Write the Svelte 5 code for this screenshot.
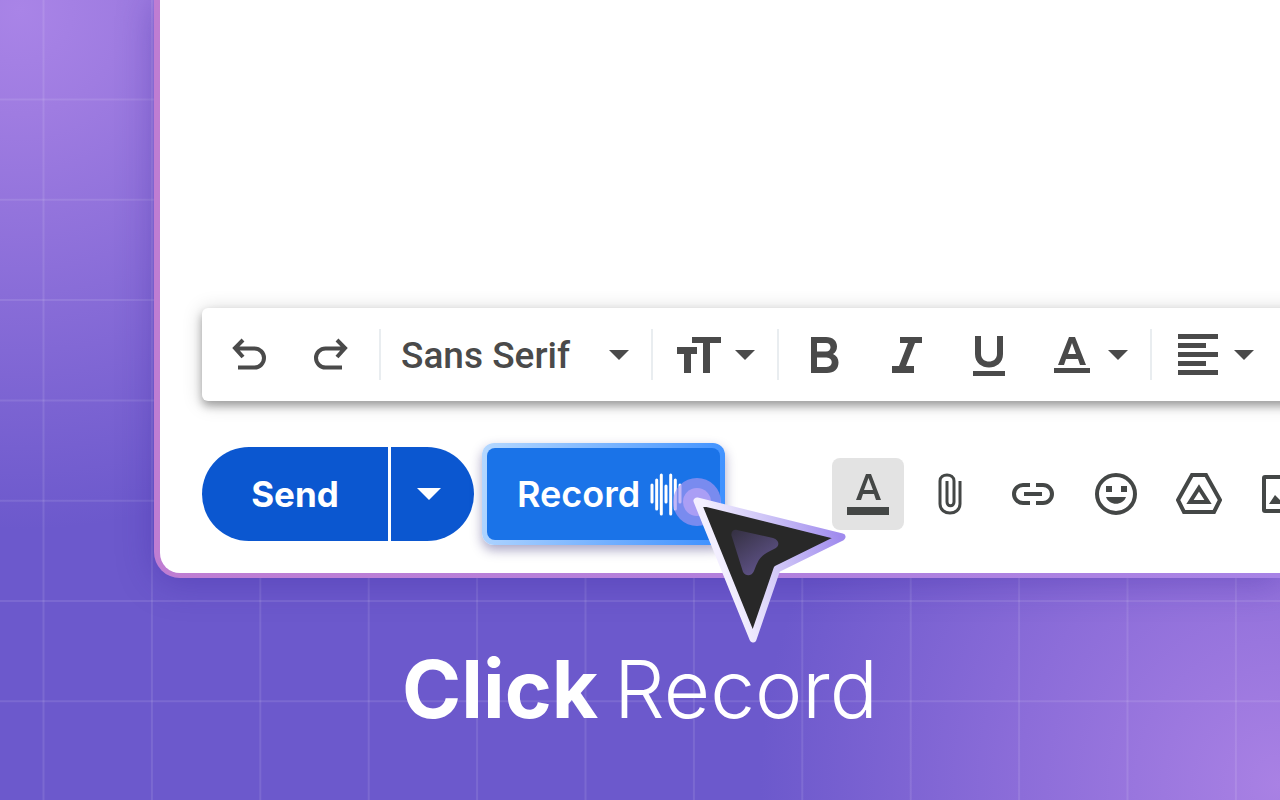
<script lang="ts">
  // Grid lines drawn behind the composer.
  const columns = Array.from({ length: 24 }, (_, i) => 43.5 + i * 108.4);
  const rows = Array.from({ length: 16 }, (_, i) => 99.5 + i * 100.3);

  // Bars of the waveform glyph: [x, top, bottom]
  const bars = [
    [2, 12, 29],
    [6.7, 7, 36],
    [11.3, 2, 41],
    [16, 13, 29],
    [20.7, 2, 41],
    [25.3, 7, 36],
    [30, 12, 29],
  ];

  let font = $state("Sans Serif");
  let formatting = $state(true);
</script>

{#snippet caret()}
  <svg class="caret" viewBox="0 0 20 10" aria-hidden="true"><path d="M0 0h20L10 10z" /></svg>
{/snippet}

<main class="stage">
  <svg class="grid" aria-hidden="true">
    {#each columns as x}
      <line x1={x} x2={x} y1="0" y2="100%" />
    {/each}
    {#each rows as y}
      <line x1="0" x2="100%" y1={y} y2={y} />
    {/each}
  </svg>

  <section class="frame">
    <div class="composer">
      <textarea class="message" aria-label="Message body"></textarea>

      <div class="toolbar" role="toolbar" aria-label="Formatting options">
        <button class="tool" aria-label="Undo">
          <svg width="36" height="36" viewBox="0 0 36 36" class="stroke">
            <path d="M12 3l-8 8 8 9M4 11.500h19.500a9 9 0 0 1 0 19H7" />
          </svg>
        </button>
        <button class="tool" aria-label="Redo">
          <svg width="36" height="36" viewBox="0 0 36 36" class="stroke">
            <path d="M24 3l8 8-8 9M32 11.500H12.500a9 9 0 0 0 0 19H29" />
          </svg>
        </button>
        <span class="rule spaced"></span>
        <label class="font">
          <select bind:value={font} aria-label="Font">
            <option>Sans Serif</option>
            <option>Serif</option>
          </select>
          {@render caret()}
        </label>
        <span class="rule"></span>
        <button class="menu size" aria-label="Size">
          <svg width="44" height="36" viewBox="0 0 44 36">
            <path d="M15 0h29v6H33v30h-7V6H15zM0 10h20v7h-6v19H7V17H0z" />
          </svg>
          {@render caret()}
        </button>
        <span class="rule gap"></span>
        <button class="tool" aria-label="Bold">
          <svg width="28" height="36" viewBox="0 0 28 36">
            <path fill-rule="evenodd" d="M0 0h15c7 0 11 4 11 9.500 0 3.500-1.500 6-4 7.500 3.500 1.500 5.500 4.500 5.500 8.500C27.500 32 23 36 16 36H0zM6 6v8.500h9c6 0 6-8.500 0-8.500zM6 20.500V30h9.500c7 0 7-9.500 0-9.500z" />
          </svg>
        </button>
        <button class="tool" aria-label="Italic">
          <svg width="30" height="36" viewBox="0 0 30 36">
            <path d="M8 0h22v6h-7L14 29h8v7H0v-7h7l9-23H8z" />
          </svg>
        </button>
        <button class="tool" aria-label="Underline">
          <svg width="32" height="42" viewBox="0 0 32 42">
            <path d="M2 2h6v18c0 10 16 10 16 0V2h6v18c0 18-28 18-28 0zM0 37h32v5H0z" />
          </svg>
        </button>
        <button class="menu color" aria-label="Text color">
          <svg width="36" height="36" viewBox="0 0 36 36">
            <path fill-rule="evenodd" d="M15 0h6l11 28h-6l-2-6H12l-2 6H4zM14 17h8L18 6zM0 31h36v5H0z" />
          </svg>
          {@render caret()}
        </button>
        <span class="rule"></span>
        <button class="menu align" aria-label="Align">
          <svg width="40" height="42" viewBox="0 0 40 42">
            <path d="M0 0h40v5H0zM0 9h28v5H0zM0 18h40v5H0zM0 27h28v5H0zM0 36h40v5H0z" />
          </svg>
          {@render caret()}
        </button>
      </div>

      <div class="actions">
        <div class="send-group">
          <button class="send">Send</button>
          <button class="send-more" aria-label="More send options">
            <svg width="24" height="12" viewBox="0 0 24 12"><path d="M0 0h24L12 12z" /></svg>
          </button>
        </div>

        <div class="record-wrap">
          <button class="record">
            <span class="record-face">
              Record
              <svg width="33" height="43" viewBox="0 0 33 43" aria-hidden="true">
                {#each bars as [x, top, bottom]}
                  <line x1={x} x2={x} y1={top} y2={bottom} />
                {/each}
              </svg>
            </span>
          </button>
          <svg class="pointer" width="180" height="176" viewBox="0 0 180 176" aria-hidden="true">
            <defs>
              <linearGradient id="edge" gradientUnits="userSpaceOnUse" x1="50" y1="90" x2="165" y2="55">
                <stop offset="0" stop-color="#f3efff" />
                <stop offset="0.5" stop-color="#cbc1f6" />
                <stop offset="1" stop-color="#a08bee" />
              </linearGradient>
              <linearGradient id="core" x1="0" y1="0" x2="0.7" y2="1">
                <stop offset="0" stop-color="#343041" />
                <stop offset="1" stop-color="#62558d" />
              </linearGradient>
            </defs>
            <circle cx="25" cy="29" r="24" fill="#a797f2" fill-opacity="0.68" />
            <circle cx="25" cy="29" r="14" fill="#aa9ef5" />
            <path d="M25 28 170 64 105 96 81 166z" fill="#282828" stroke="url(#edge)" stroke-width="7" stroke-linejoin="round" />
            <path d="M65 57 101 65c7 2 7 9 1 11-13 6-15 9-20 22-2 5-8 6-11 1L60 64c-2-4 1-8 5-7z" fill="url(#core)" />
          </svg>
        </div>

        <div class="extras">
          <button
            class="format"
            class:on={formatting}
            aria-label="Formatting options"
            aria-pressed={formatting}
            onclick={() => (formatting = !formatting)}
          >
            <svg width="42" height="42" viewBox="0 0 42 42">
              <path fill-rule="evenodd" d="M19 1h5l10 26h-5l-2-6H16l-2 6H9zM17 17h9L21.500 5zM0 34h42v8H0z" />
            </svg>
          </button>
          <button class="extra" aria-label="Attach files">
            <svg width="24" height="42" viewBox="0 0 24 42" class="stroke thin">
              <path d="M22 8v23c0 12-20 12-20 0V8c0-8 14-8 14 0v21c0 5-7 5-7 0V8" />
            </svg>
          </button>
          <button class="extra" aria-label="Insert link">
            <svg width="42" height="22" viewBox="0 0 42 22" class="stroke">
              <path d="M18 2h-7a9 9 0 0 0 0 18h7M24 2h7a9 9 0 0 1 0 18h-7M12 11h18" />
            </svg>
          </button>
          <button class="extra" aria-label="Insert emoji">
            <svg width="42" height="42" viewBox="0 0 42 42">
              <circle cx="21" cy="21" r="19" fill="none" stroke="currentColor" stroke-width="4" />
              <path d="M11 13h6v6h-6zM26 13h6v6h-6zM11 24h20c-3 9-17 9-20 0z" />
            </svg>
          </button>
          <button class="extra" aria-label="Insert files from Drive">
            <svg width="46" height="42" viewBox="0 0 46 42" class="stroke">
              <path d="M16 2h14l14 25-6 12H8L2 27z" />
              <path d="M23 15 32 29H14z" />
            </svg>
          </button>
          <button class="extra" aria-label="Insert photo">
            <svg width="40" height="38" viewBox="0 0 40 38">
              <rect x="2" y="2" width="36" height="34" rx="1" fill="none" stroke="currentColor" stroke-width="4" />
              <path d="M7 29l6-9 5 5 7-9 9 13z" />
            </svg>
          </button>
        </div>
      </div>
    </div>
  </section>

  <h1 class="caption"><strong>Click</strong> Record</h1>
</main>

<style>
  :global(body) {
    margin: 0;
  }

  .stage {
    position: relative;
    display: flex;
    flex-direction: column;
    min-height: 100vh;
    overflow: hidden;
    font-family: Inter, sans-serif;
    background:
      radial-gradient(circle 520px at 20px 10px, #a984e7 0%, #9f7ce1 20%, rgba(109, 90, 205, 0) 100%),
      radial-gradient(circle 520px at 100% 98%, #a981e4 0%, #8c6dd9 50%, #6c59cc 100%),
      #6c59cc;
  }

  .grid {
    position: absolute;
    inset: 0;
    width: 100%;
    height: 100%;
    stroke: rgba(255, 255, 255, 0.1);
    stroke-width: 2;
  }

  .frame {
    position: relative;
    z-index: 1;
    display: flex;
    flex: 1;
    margin-left: 154px;
    padding: 0 0 5px 6px;
    border-bottom-left-radius: 26px;
    background: linear-gradient(90deg, #bf7dd2, #a783e6);
    box-shadow: 0 4px 36px rgba(50, 30, 150, 0.34);
  }

  .composer {
    display: flex;
    flex: 1;
    flex-direction: column;
    min-width: 0;
    padding: 0 0 28px 42px;
    border-bottom-left-radius: 20px;
    background: #fff;
  }

  .message {
    flex: 1;
    min-height: 120px;
    padding: 40px 0;
    border: 0;
    outline: 0;
    resize: none;
    background: transparent;
    font: 28px Inter, sans-serif;
  }

  button {
    display: flex;
    flex: none;
    align-items: center;
    justify-content: center;
    padding: 0;
    border: 0;
    background: none;
    color: inherit;
    font-family: inherit;
    cursor: pointer;
  }

  svg {
    display: block;
    flex: none;
    fill: currentColor;
  }

  .stroke {
    fill: none;
    stroke: currentColor;
    stroke-width: 4;
  }

  .thin {
    stroke-width: 3;
  }

  /* Runs past the right edge so its shadow has no end there. */
  .toolbar {
    display: flex;
    align-items: center;
    height: 93px;
    margin-right: -24px;
    padding-left: 6px;
    border-radius: 6px 0 0 6px;
    background: #fff;
    color: #4a4a4a;
    box-shadow:
      0 5px 8px rgba(0, 0, 0, 0.3),
      0 2px 20px rgba(0, 0, 0, 0.18);
  }

  .tool {
    width: 82px;
    height: 72px;
  }

  .rule {
    flex: none;
    width: 2px;
    height: 51px;
    background: #e9edf0;
  }

  .spaced {
    margin-left: 7px;
  }

  .gap {
    margin-right: 5px;
  }

  .caret {
    width: 20px;
    height: 10px;
  }

  .font {
    display: flex;
    flex: none;
    align-items: center;
    width: 228px;
    padding: 0 22px 0 20px;
  }

  .font select {
    flex: 1;
    padding: 2px 0 0;
    border: 0;
    outline: 0;
    appearance: none;
    background: none;
    color: inherit;
    font: 500 37px Roboto, sans-serif;
  }

  .menu {
    justify-content: flex-start;
    height: 72px;
  }

  .size {
    gap: 14px;
    width: 124px;
    padding-left: 24px;
  }

  .color {
    gap: 18px;
    width: 120px;
    padding-left: 24px;
  }

  .align {
    gap: 16px;
    width: 128px;
    padding-left: 26px;
  }

  .actions {
    display: flex;
    align-items: center;
    margin-top: 42px;
  }

  .send-group {
    display: flex;
    flex: none;
    gap: 3px;
    height: 94px;
    color: #fff;
  }

  .send {
    width: 186px;
    border-radius: 47px 0 0 47px;
    background: #0b57d0;
    font-size: 35px;
    font-weight: 700;
  }

  .send-more {
    width: 83px;
    padding-right: 8px;
    border-radius: 0 47px 47px 0;
    background: #0b57d0;
  }

  .record-wrap {
    position: relative;
    z-index: 1;
    flex: none;
    margin-left: 8px;
  }

  .record {
    width: 243px;
    height: 102px;
    padding: 5px;
    border-radius: 12px;
    background: linear-gradient(100deg, #b5d8ff, #3a8eff);
    box-shadow: 0 5px 12px rgba(40, 30, 110, 0.4);
    color: #fff;
    font-size: 36px;
    font-weight: 600;
  }

  .record-face {
    display: flex;
    flex: 1;
    gap: 10px;
    align-items: center;
    align-self: stretch;
    padding-left: 30px;
    border-radius: 8px;
    background: #1a73e8;
  }

  .record-face svg {
    stroke: #fff;
    stroke-width: 3;
    stroke-linecap: round;
  }

  .pointer {
    position: absolute;
    top: 30px;
    left: 190px;
    pointer-events: none;
  }

  .extras {
    display: flex;
    align-items: center;
    margin-left: 107px;
    color: #444746;
  }

  .format {
    width: 72px;
    height: 72px;
    margin-right: 4px;
    border-radius: 8px;
  }

  .format.on {
    background: #e3e3e3;
  }

  .extra {
    width: 83px;
    height: 72px;
  }

  .caption {
    position: relative;
    display: flex;
    gap: 16px;
    align-items: center;
    justify-content: center;
    height: 222px;
    margin: 0;
    color: #fff;
    font-size: 80px;
    font-weight: 300;
    line-height: 96px;
  }

  .caption strong {
    font-weight: 700;
  }
</style>
